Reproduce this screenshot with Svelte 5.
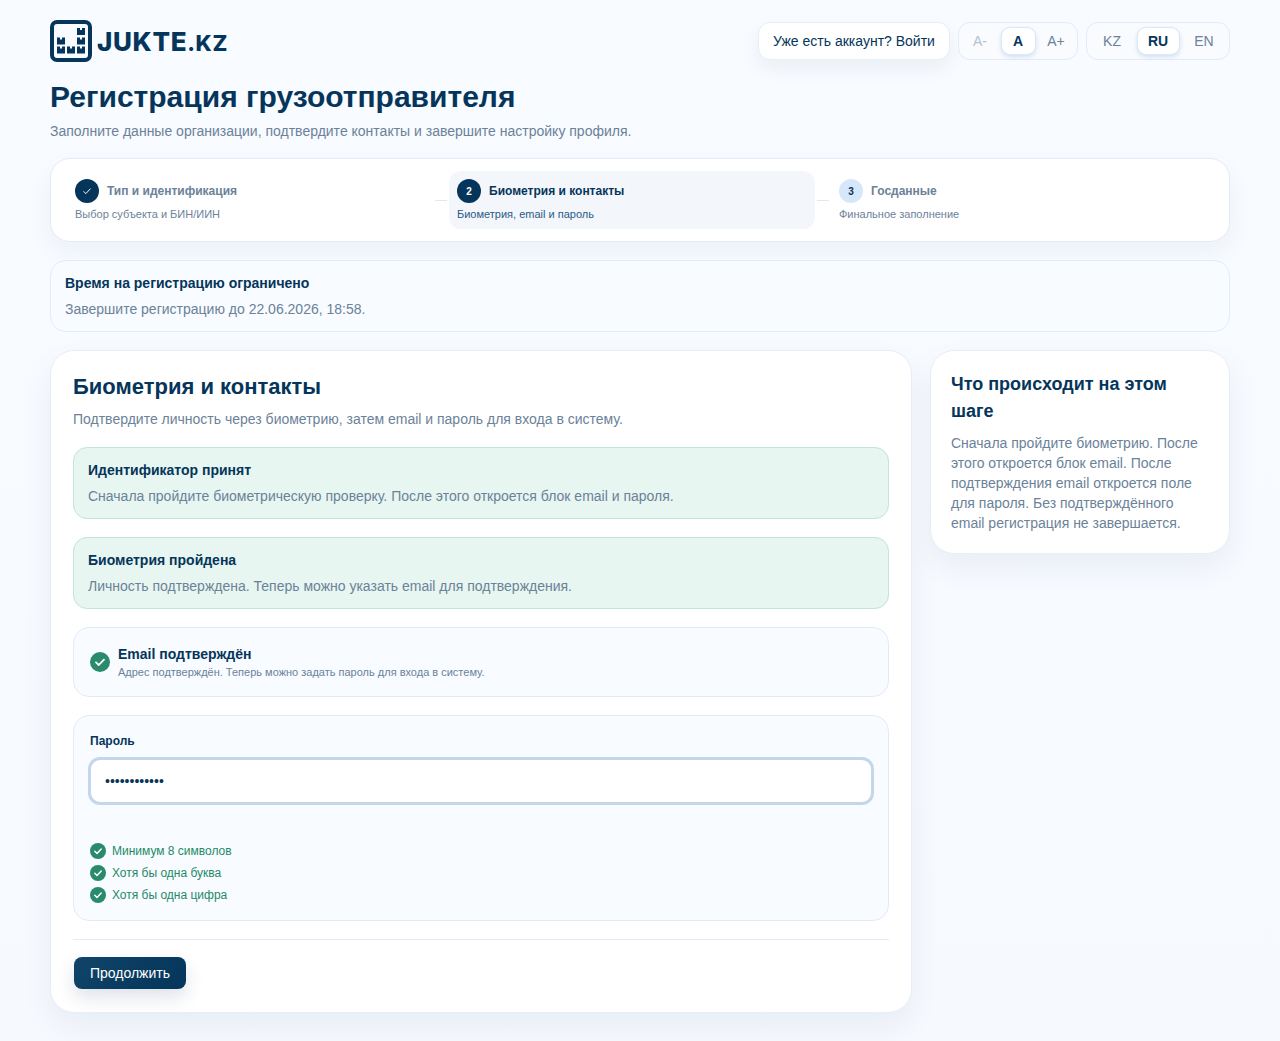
<script>
	const steps = [
		{ mark: 'done', title: 'Тип и идентификация', sub: 'Выбор субъекта и БИН/ИИН' },
		{ mark: '2', title: 'Биометрия и контакты', sub: 'Биометрия, email и пароль', active: true },
		{ mark: '3', title: 'Госданные', sub: 'Финальное заполнение' }
	];
	const rules = ['Минимум 8 символов', 'Хотя бы одна буква', 'Хотя бы одна цифра'];
	const block = 'v-7h3v2h2v-2h3v7z';
</script>

{#snippet check(size)}
	<svg class="check" width={size} height={size} viewBox="0 0 20 20" aria-hidden="true">
		<circle cx="10" cy="10" r="10" fill="#2a8a6c" />
		<path d="M6 10.3l2.8 2.7 5.2-5.4" fill="none" stroke="#fff" stroke-width="1.8" stroke-linecap="round" stroke-linejoin="round" />
	</svg>
{/snippet}

<div class="page">
	<header class="top">
		<div class="logo">
			<svg width="42" height="42" viewBox="0 0 42 42" aria-hidden="true">
				<rect x="2" y="2" width="38" height="38" rx="5" fill="none" stroke="#05355a" stroke-width="4" />
				<g fill="#05355a">
					<path d="M7 33.5{block}" />
					<path d="M17 33.5{block}" />
					<path d="M27 33.5{block}" />
					<path d="M7 24.5{block}" />
					<path d="M27 24.5{block}" />
					<path d="M27 15{block}" />
				</g>
			</svg>
			<span class="wordmark">JUKTE<small>.KZ</small></span>
		</div>
		<div class="top-actions">
			<button class="login">Уже есть аккаунт? Войти</button>
			<div class="switcher">
				<button class="faded">A-</button>
				<button class="on">A</button>
				<button>A+</button>
			</div>
			<div class="switcher lang">
				<button>KZ</button>
				<button class="on">RU</button>
				<button>EN</button>
			</div>
		</div>
	</header>

	<h1>Регистрация грузоотправителя</h1>
	<p class="lead">Заполните данные организации, подтвердите контакты и завершите настройку профиля.</p>

	<nav class="stepper">
		{#each steps as step, i}
			<div class="step-col">
				<div class="step" class:active={step.active}>
					<div class="step-head">
						<span class="mark" class:dark={step.mark !== '3'}>
							{#if step.mark === 'done'}
								<svg width="10" height="10" viewBox="0 0 10 10" aria-hidden="true">
									<path d="M1.5 5.3l2.4 2.3 4.6-5" fill="none" stroke="#fff" stroke-width="1" />
								</svg>
							{:else}
								{step.mark}
							{/if}
						</span>
						<span class="step-title">{step.title}</span>
					</div>
					<div class="step-sub">{step.sub}</div>
				</div>
				<span class="connector" class:hidden={i === steps.length - 1}></span>
			</div>
		{/each}
	</nav>

	<section class="notice">
		<strong>Время на регистрацию ограничено</strong>
		<p>Завершите регистрацию до 22.06.2026, 18:58.</p>
	</section>

	<div class="columns">
		<main class="card form">
			<h2>Биометрия и контакты</h2>
			<p class="form-lead">Подтвердите личность через биометрию, затем email и пароль для входа в систему.</p>

			<div class="alert">
				<strong>Идентификатор принят</strong>
				<p>Сначала пройдите биометрическую проверку. После этого откроется блок email и пароля.</p>
			</div>
			<div class="alert">
				<strong>Биометрия пройдена</strong>
				<p>Личность подтверждена. Теперь можно указать email для подтверждения.</p>
			</div>

			<div class="panel email">
				{@render check(20)}
				<div>
					<div class="email-title">Email подтверждён</div>
					<div class="email-sub">Адрес подтверждён. Теперь можно задать пароль для входа в систему.</div>
				</div>
			</div>

			<div class="panel password">
				<label for="pw">Пароль</label>
				<input id="pw" type="password" value="Qwerty123456" />
				<ul>
					{#each rules as rule}
						<li>{@render check(16)}{rule}</li>
					{/each}
				</ul>
			</div>

			<div class="actions">
				<button class="primary">Продолжить</button>
			</div>
		</main>

		<aside class="card side">
			<h3>Что происходит на этом шаге</h3>
			<p>Сначала пройдите биометрию. После этого откроется блок email. После подтверждения email откроется поле для пароля. Без подтверждённого email регистрация не завершается.</p>
		</aside>
	</div>
</div>

<style>
	:global(body) {
		background: #f7faff;
	}

	.page {
		box-sizing: border-box;
		min-height: 1041px;
		padding: 20px 50px 29px;
		font-family: 'Liberation Sans', Arial, sans-serif;
		color: #05355a;
		background: linear-gradient(180deg, #f8fbff 0%, #f6f9fe 100%);
	}

	button {
		font-family: inherit;
		cursor: pointer;
	}

	.top {
		display: flex;
		justify-content: space-between;
		align-items: center;
		height: 42px;
	}

	.logo {
		display: flex;
		align-items: center;
		gap: 5px;
	}

	.logo svg {
		display: block;
	}

	.wordmark {
		font-family: Inter, 'Liberation Sans', sans-serif;
		font-size: 26px;
		font-weight: 800;
		letter-spacing: 0.65px;
		color: #05355a;
	}

	.wordmark small {
		font-size: 22px;
	}

	.top-actions {
		display: flex;
		gap: 8px;
	}

	.login {
		height: 38px;
		width: 192px;
		padding: 0;
		font-size: 14px;
		color: #05355a;
		background: #fff;
		border: 1px solid #e6eef7;
		border-radius: 12px;
		box-shadow: 0 8px 20px rgba(15, 50, 90, 0.06);
	}

	.switcher {
		display: flex;
		align-items: center;
		justify-content: center;
		box-sizing: border-box;
		width: 120px;
		height: 38px;
		background: #f9fbff;
		border: 1px solid #e3ecf6;
		border-radius: 12px;
	}

	.switcher.lang {
		width: 144px;
	}

	.switcher button {
		flex: none;
		height: 28px;
		width: 35px;
		margin: 0 1.5px;
		padding: 0;
		font-size: 14px;
		color: #6b8299;
		background: none;
		border: 1px solid transparent;
		border-radius: 9px;
	}

	.switcher.lang button {
		width: 43px;
	}

	.switcher button.faded {
		color: #b4c2d0;
	}

	.switcher button.on {
		font-weight: 700;
		color: #05355a;
		background: #fff;
		border-color: #dbe7f3;
		box-shadow: 0 2px 4px rgba(40, 100, 170, 0.18);
	}

	h1 {
		margin: 16px 0 0;
		font-size: 30px;
		line-height: 38px;
		font-weight: 700;
	}

	.lead {
		margin: 5px 0 0;
		font-size: 14px;
		line-height: 20px;
		color: #6b8299;
	}

	.stepper {
		display: grid;
		grid-template-columns: repeat(3, 1fr);
		margin-top: 17px;
		padding: 12px 16px;
		background: #fff;
		border: 1px solid #e3ecf6;
		border-radius: 20px;
		box-shadow: 0 10px 24px rgba(15, 50, 90, 0.05);
	}

	.step-col {
		display: flex;
		align-items: center;
		gap: 2px;
	}

	.step {
		flex: 1;
		box-sizing: border-box;
		height: 58px;
		padding: 8px;
		border-radius: 12px;
	}

	.step.active {
		background: #f3f6fb;
	}

	.step-head {
		display: flex;
		align-items: center;
		gap: 8px;
	}

	.mark {
		display: flex;
		align-items: center;
		justify-content: center;
		width: 24px;
		height: 24px;
		border-radius: 50%;
		font-size: 10px;
		font-weight: 700;
		color: #05355a;
		background: #d6e7fa;
	}

	.mark.dark {
		color: #fff;
		background: #05355a;
	}

	.step-title {
		font-size: 12px;
		font-weight: 700;
		color: #6b8299;
	}

	.active .step-title {
		color: #05355a;
	}

	.step-sub {
		margin-top: 4px;
		font-size: 11px;
		line-height: 14px;
		color: #6b8299;
	}

	.active .step-sub {
		color: #2a5a86;
	}

	.connector {
		flex: none;
		width: 12px;
		height: 1px;
		margin-right: 2px;
		background: #dfe9f4;
	}

	.connector.hidden {
		visibility: hidden;
	}

	.notice {
		box-sizing: border-box;
		height: 72px;
		margin-top: 18px;
		padding: 13px 14px;
		background: #f8fbff;
		border: 1px solid #e3ecf6;
		border-radius: 16px;
	}

	.notice strong {
		display: block;
		font-size: 14px;
		line-height: 18px;
	}

	.notice p {
		margin: 8px 0 0;
		font-size: 14px;
		line-height: 18px;
		color: #6b8299;
	}

	.columns {
		display: grid;
		grid-template-columns: 862px 300px;
		gap: 18px;
		align-items: start;
		margin-top: 18px;
	}

	.card {
		box-sizing: border-box;
		background: #fff;
		border: 1px solid #e6eef7;
		border-radius: 24px;
		box-shadow: 0 14px 32px rgba(15, 50, 90, 0.06);
	}

	.form {
		padding: 22px;
	}

	h2 {
		margin: 0;
		font-size: 22px;
		line-height: 28px;
	}

	.form-lead {
		margin: 8px 0 0;
		font-size: 14px;
		line-height: 20px;
		color: #6b8299;
	}

	.alert {
		box-sizing: border-box;
		height: 72px;
		margin-top: 18px;
		padding: 13px 14px;
		background: #e7f6f0;
		border: 1px solid #bfe6d7;
		border-radius: 14px;
	}

	.alert strong {
		display: block;
		font-size: 14px;
		line-height: 18px;
	}

	.alert p {
		margin: 8px 0 0;
		font-size: 14px;
		line-height: 18px;
		color: #6b8299;
	}

	.panel {
		box-sizing: border-box;
		margin-top: 18px;
		background: #f8fbff;
		border: 1px solid #e3ecf6;
		border-radius: 16px;
	}

	.email {
		display: flex;
		align-items: center;
		gap: 8px;
		height: 70px;
		padding: 0 16px;
	}

	.check {
		flex: none;
		display: block;
	}

	.email-title {
		font-size: 14px;
		font-weight: 700;
		line-height: 16px;
	}

	.email-sub {
		margin-top: 3px;
		font-size: 11px;
		line-height: 14px;
		color: #6b8299;
	}

	.password {
		height: 206px;
		padding: 16px;
	}

	.password label {
		display: block;
		font-size: 12px;
		font-weight: 700;
		line-height: 18px;
	}

	.password input {
		display: block;
		box-sizing: border-box;
		width: 786px;
		height: 48px;
		margin: 7px 0 0 -2px;
		padding: 0 14px;
		font-family: inherit;
		font-size: 14px;
		color: #05355a;
		background: #fff;
		border: 3px solid #c3d6ea;
		border-radius: 12px;
		outline: none;
	}

	.password ul {
		display: flex;
		flex-direction: column;
		gap: 6px;
		margin: 38px 0 0;
		padding: 0;
		list-style: none;
	}

	.password li {
		display: flex;
		align-items: center;
		gap: 6px;
		height: 16px;
		font-size: 12px;
		color: #1f8a66;
	}

	.actions {
		margin-top: 18px;
		padding: 17px 0 1px 1px;
		border-top: 1px solid #e3ecf6;
	}

	.primary {
		display: block;
		width: 112px;
		height: 32px;
		padding: 0;
		font-size: 14px;
		color: #fff;
		background: linear-gradient(135deg, #0f4468, #05355a);
		border: none;
		border-radius: 8px;
		box-shadow: 0 8px 18px rgba(15, 50, 90, 0.14);
	}

	.side {
		padding: 20px;
	}

	h3 {
		margin: 0;
		font-size: 18px;
		line-height: 27px;
	}

	.side p {
		margin: 8px 0 0;
		font-size: 14px;
		line-height: 20px;
		color: #6b8299;
	}
</style>
